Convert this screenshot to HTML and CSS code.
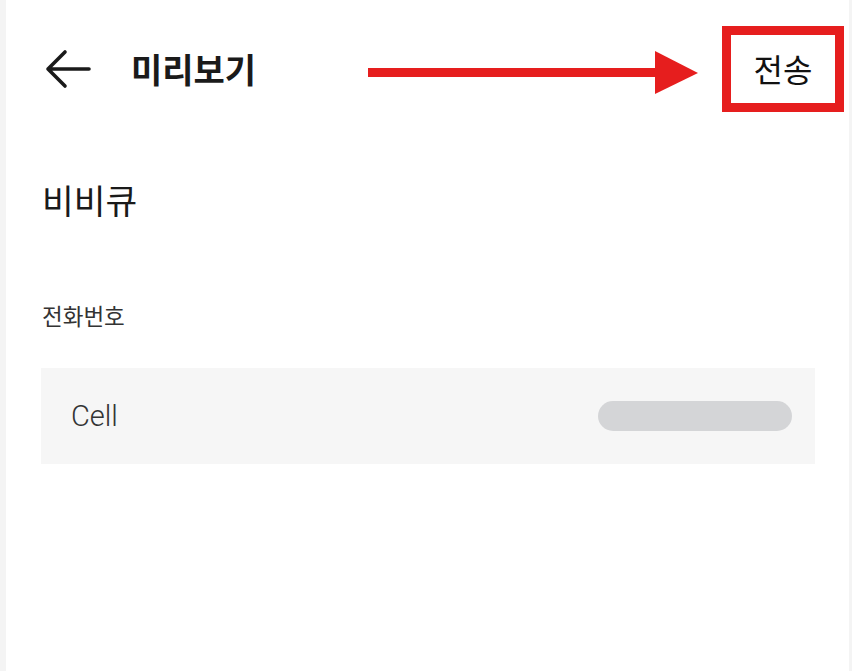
FILE: index.html
```html
<!DOCTYPE html>
<html lang="ko">
<head>
    <meta charset="UTF-8">
    <meta name="viewport" content="width=device-width, initial-scale=1.0">
    <title>미리보기</title>
    <link rel="stylesheet" href="styles.css">
</head>
<body>
<div class="app">
    <div class="topbar">
        <svg class="back" width="48" height="48" viewBox="0 0 48 48">
            <path d="M4 24 H45 M21 7 L4 24 L21 41" fill="none" stroke="#1a1a1a" stroke-width="3.6" stroke-linecap="round" stroke-linejoin="round"/>
        </svg>
        <h1 class="title">미리보기</h1>
        <div class="spacer"></div>
        <button class="send">전송</button>
        <svg class="pointer" width="332" height="44" viewBox="0 0 332 44">
            <rect x="0" y="17" width="288" height="9" fill="#e61e1e"/>
            <polygon points="287,0 330,22 287,43" fill="#e61e1e"/>
        </svg>
    </div>

    <div class="content">
        <div class="name">비비큐</div>
        <div class="label">전화번호</div>
        <div class="phone">
            <span class="phone-type">Cell</span>
            <span class="phone-mask"></span>
        </div>
    </div>
</div>
</body>
</html>
```

FILE: styles.css
```css
body
{
    margin: 0;
    background: #ffffff;
    font-family: Roboto, "Noto Sans CJK KR", sans-serif;
    color: #1a1a1a;
}
.app
{
    min-height: 671px;
    box-sizing: border-box;
    border-left: 6px solid #f4f4f4;
    border-right: 3px solid #f4f4f4;
}
.topbar
{
    position: relative;
    display: flex;
    align-items: center;
    height: 138px;
    padding: 0 5px 0 38px;
}
.back
{
    flex: none;
}
.title
{
    margin: 0 0 0 39px;
    font-family: "Noto Sans CJK KR", sans-serif;
    font-size: 34px;
    font-weight: 700;
    line-height: 40px;
    color: #1a1a1a;
}
.spacer
{
    flex: 1;
}
.send
{
    width: 122px;
    height: 86px;
    box-sizing: border-box;
    border: 9px solid #e61e1e;
    background: #ffffff;
    font-family: "Noto Sans CJK KR", sans-serif;
    font-size: 32px;
    color: #111111;
    padding: 0 0 2px 0;
}
/* annotation arrow drawn over the bar */
.pointer
{
    position: absolute;
    left: 362px;
    top: 51px;
}
.content
{
    padding: 41px 34px 0 35px;
}
.name
{
    font-family: "Noto Sans CJK KR", sans-serif;
    font-size: 34.5px;
    line-height: 40px;
    color: #1a1a1a;
    padding-left: 1px;
}
.label
{
    margin-top: 82px;
    font-family: "Noto Sans CJK KR", sans-serif;
    font-size: 22.5px;
    line-height: 28px;
    color: #333333;
    padding-left: 1px;
}
.phone
{
    display: flex;
    align-items: center;
    justify-content: space-between;
    margin-top: 39px;
    height: 96px;
    padding: 0 23px 0 30px;
    background: #f6f6f6;
}
.phone-type
{
    font-size: 29px;
    font-weight: 300;
    color: #333333;
}
.phone-mask
{
    width: 194px;
    height: 30px;
    border-radius: 15px;
    background: #d4d5d7;
}
```
